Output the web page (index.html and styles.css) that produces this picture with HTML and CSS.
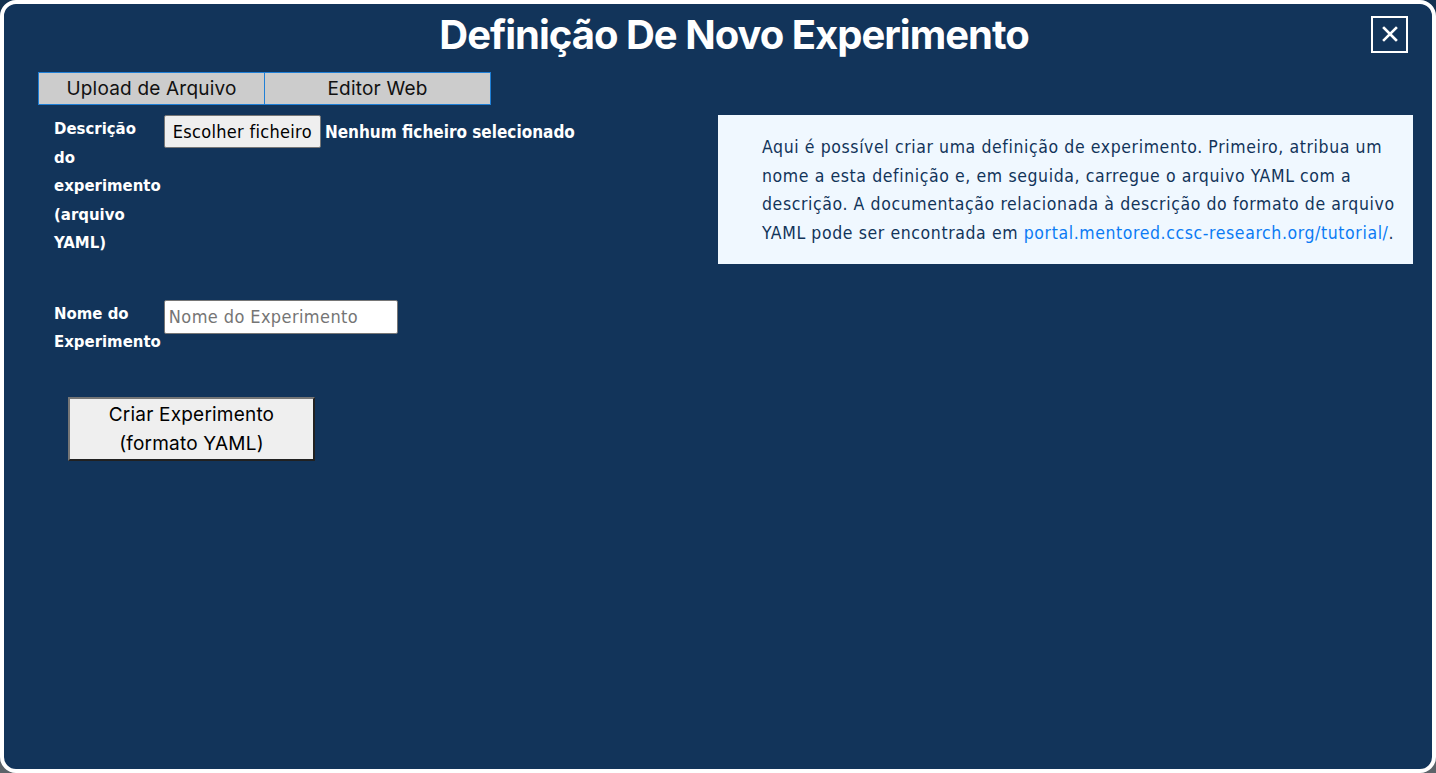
FILE: index.html
```html
<!DOCTYPE html>
<html lang="pt">
<head>
  <meta charset="UTF-8">
  <title>Definição De Novo Experimento</title>
  <link rel="stylesheet" href="styles.css">
</head>
<body>
  <div class="modal">
    <div class="modal-header">
      <span></span>
      <h1 class="modal-title">Definição De Novo Experimento</h1>
      <button class="close-button" aria-label="Fechar">
        <svg width="18" height="18" viewBox="0 0 18 18">
          <path d="M3 3 L15 15 M15 3 L3 15" stroke="#fff" stroke-width="2.6" stroke-linecap="square"/>
        </svg>
      </button>
    </div>

    <div class="tab-buttons">
      <button class="tab-button active">Upload de Arquivo</button>
      <button class="tab-button">Editor Web</button>
    </div>

    <div class="modal-body">
      <form class="experiment-form">
        <div class="form-row">
          <label for="yamlFile">Descrição do experimento (arquivo YAML)</label>
          <div class="file-field">
            <span class="file-button">Escolher ficheiro</span>
            <span class="file-name">Nenhum ficheiro selecionado</span>
          </div>
        </div>

        <div class="form-row">
          <label for="experimentName">Nome do Experimento</label>
          <input type="text" id="experimentName" placeholder="Nome do Experimento">
        </div>

        <button type="button" class="create-button">Criar Experimento<br>(formato YAML)</button>
      </form>

      <div class="info-box">
        Aqui é possível criar uma definição de experimento. Primeiro, atribua um
        nome a esta definição e, em seguida, carregue o arquivo YAML com a
        descrição. A documentação relacionada à descrição do formato de arquivo
        YAML pode ser encontrada em <a href="#">portal.mentored.ccsc-research.org/tutorial/</a>.
      </div>
    </div>
  </div>
</body>
</html>
```

FILE: styles.css
```css
html, body {
  height: 100%;
}
body {
  margin: 0;
  background: linear-gradient(#12304f, #5c6369);
  font-family: "DejaVu Sans", sans-serif;
  font-stretch: condensed;
}
.modal {
  box-sizing: border-box;
  height: 100%;
  background: #12345a;
  border: 4px solid #fff;
  border-radius: 16px;
  color: #fff;
}
.modal-header {
  display: grid;
  grid-template-columns: 1fr auto 1fr;
  align-items: center;
  padding: 2px 24px 0 28px;
  height: 56px;
}
.modal-title {
  margin: 0;
  padding-left: 28px;
  font-family: Inter, sans-serif;
  font-stretch: normal;
  font-size: 40px;
  font-weight: 700;
  letter-spacing: -1px;
}
.close-button {
  justify-self: end;
  width: 37px;
  height: 37px;
  padding: 0;
  background: transparent;
  border: 2px solid #fff;
  display: flex;
  align-items: center;
  justify-content: center;
  cursor: pointer;
}
.tab-buttons {
  display: flex;
  margin: 10px 0 0 34px;
}
.tab-button {
  width: 227px;
  height: 33px;
  background: #ccc;
  border: 1px solid #1f7fd6;
  color: #111;
  font-family: Inter, sans-serif;
  font-stretch: normal;
  font-size: 19px;
  letter-spacing: 0.2px;
  cursor: pointer;
}
.tab-button + .tab-button {
  margin-left: -1px;
}
.modal-body {
  display: flex;
  justify-content: space-between;
  align-items: flex-start;
  padding: 10px 19px 0 50px;
}
.experiment-form {
  display: flex;
  flex-direction: column;
}
.form-row {
  display: grid;
  grid-template-columns: min-content auto;
  column-gap: 3px;
  align-items: start;
  margin-bottom: 42px;
}
.form-row label {
  font-weight: bold;
  font-size: 16.6px;
  line-height: 28.5px;
}
.file-field {
  display: flex;
  align-items: center;
  gap: 4px;
}
.file-button {
  padding: 5px 8px;
  background: #efefef;
  border: 1px solid #767676;
  border-radius: 2px;
  color: #000;
  font-size: 18px;
  letter-spacing: 0.3px;
}
.file-name {
  font-weight: bold;
  font-size: 17px;
}
input[type="text"] {
  width: 234px;
  height: 34px;
  box-sizing: border-box;
  padding: 4px 4px;
  border: 1px solid #767676;
  border-radius: 2px;
  font-family: "DejaVu Sans", sans-serif;
  font-stretch: condensed;
  font-size: 18px;
  letter-spacing: 0.4px;
}
input::placeholder {
  color: #757575;
}
.create-button {
  align-self: flex-start;
  margin: -2px 0 0 14px;
  width: 247px;
  height: 64px;
  background: #efefef;
  border: 2px outset #767676;
  color: #000;
  font-family: Inter, sans-serif;
  font-stretch: normal;
  font-size: 19px;
  letter-spacing: 0.2px;
  line-height: 29px;
  cursor: pointer;
}
.info-box {
  box-sizing: border-box;
  width: 695px;
  padding: 18px 4px 17px 44px;
  background: #f0f8ff;
  color: #12345a;
  font-size: 17.5px;
  letter-spacing: 0.6px;
  line-height: 28.5px;
}
.info-box a {
  color: #0b7bf4;
  text-decoration: none;
  white-space: nowrap;
}
```
